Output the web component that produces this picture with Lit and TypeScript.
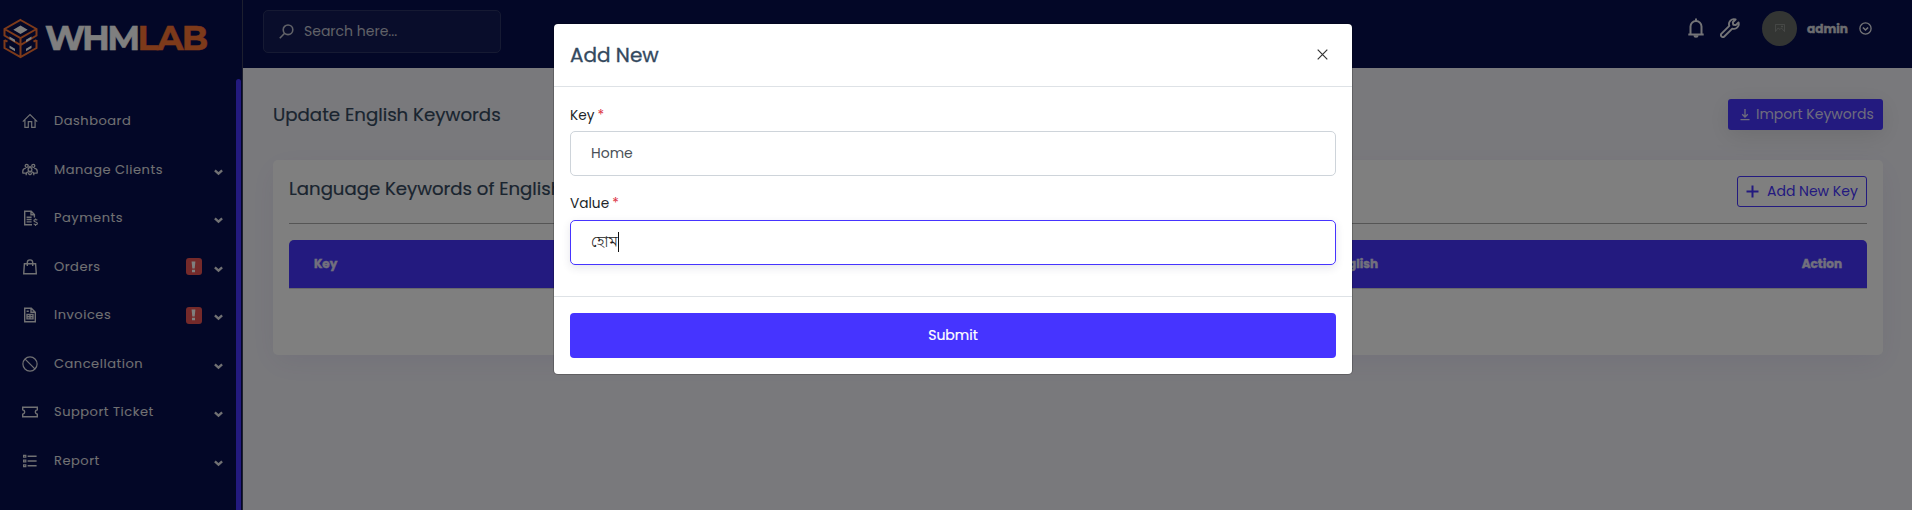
import { LitElement, html, css, svg, nothing } from "lit";
import { customElement, property } from "lit/decorators.js";

/** Wordmark part whose tracking is adjusted so that it fills a given measure. */
@customElement("tracked-text")
class TrackedText extends LitElement {
  @property({ type: Number }) measure = 0;
  @property() text = "";

  static styles = css`
    :host { display: inline-block; white-space: nowrap; flex: none; }
    .t { display: inline-block; }
  `;

  firstUpdated() {
    this.fit();
    document.fonts.ready.then(() => this.fit());
  }

  fit() {
    const el = this.renderRoot.querySelector(".t") as HTMLElement;
    el.style.letterSpacing = "0px";
    const natural = el.getBoundingClientRect().width;
    const gap = (this.measure - natural) / this.text.length;
    el.style.letterSpacing = gap.toFixed(3) + "px";
  }

  render() {
    return html`<span class="t">${this.text}</span>`;
  }
}

const t = (text: string, measure: number) =>
  html`<tracked-text .text=${text} .measure=${measure}></tracked-text>`;

const menuIcons: Record<string, unknown> = {
  home: svg`<path d="M.8 8.600 8 1.600l7.200 7M2.900 7v7.400h3.400V8.700h3.400v5.700h3.400V7"/>`,
  users: svg`<g stroke-width="1.300"><circle cx="4.700" cy="3.800" r="1.500"/><circle cx="11.300" cy="3.800" r="1.500"/><circle cx="8" cy="7.600" r="1.900"/><path d="M.8 11.500V9.300C.8 7.500 2 6.400 3.800 6.400M15.200 11.500V9.300c0-1.800-1.200-2.900-3-2.900M4.200 13.200v-1c0-1.400 1-2.300 2.300-2.300h3c1.300 0 2.300.9 2.300 2.300v1M.8 11.200h3M12.200 11.200h3M6 11.400l2 1.300 2-1.300M6.500 5.500l1.500-1 1.500 1"/></g>`,
  payments: svg`<path stroke-width="1.400" d="M10 14.800H2.700V1.200h6.500l3.200 3.300v3M9 1.400v3.300h3.200M4.600 7.300h5M4.600 9.500h5M4.600 11.900h5"/><path d="M15.200 10.200c-.5-.9-3.300-.9-3.300.6s3.500.9 3.500 2.600c0 1.600-3.100 1.400-3.700.4M13.500 8.600v1M13.500 14.800v1.200"/>`,
  bag: svg`<path stroke-width="1.400" d="M2.400 4.800h11.200l.7 10H1.700zM5.300 7V3.600a2.700 2.700 0 0 1 5.400 0V7"/>`,
  invoice: svg`<path stroke-width="1.400" d="M2.700 1.200h6.600l4 4v9.600H2.700zM9 1.400v3.900h4M4.600 4.200h2.200M5 7.500h6v4.400H5zM5 9.700h6M8 7.500v4.400"/>`,
  ban: svg`<circle cx="8" cy="8" r="7.100"/><path d="m3.100 3.100 9.800 9.800"/>`,
  ticket: svg`<path stroke-width="1.400" d="M.7 3.200h14.600v2.600c-1.200.3-2 1.100-2 2.200s.8 1.900 2 2.200v2.600H.7v-2.600c1.200-.3 2-1.100 2-2.200S1.900 6.100.7 5.800z"/>`,
  list: svg`<path d="M1.600 2.300h2.200v1.800H1.600zM1.600 7.100h2.200v1.800H1.600zM1.600 11.900h2.200v1.800H1.600z"/><path stroke-width="1.400" d="M5.600 3.200h9M5.600 8h9M5.600 12.800h9"/>`,
};

interface Item { icon: string; label: string; arrow?: boolean; alert?: boolean; }

const items: Item[] = [
  { icon: "home", label: "Dashboard" },
  { icon: "users", label: "Manage Clients", arrow: true },
  { icon: "payments", label: "Payments", arrow: true },
  { icon: "bag", label: "Orders", arrow: true, alert: true },
  { icon: "invoice", label: "Invoices", arrow: true, alert: true },
  { icon: "ban", label: "Cancellation", arrow: true },
  { icon: "ticket", label: "Support Ticket", arrow: true },
  { icon: "list", label: "Report", arrow: true },
];

@customElement("app-root")
class AppRoot extends LitElement {
  static styles = css`
    * { box-sizing: border-box; }
    :host {
      display: block; position: relative; width: 100%; height: 510px; overflow: hidden;
      font-family: Poppins, Inter, "Noto Sans Bengali", "Noto Sans", sans-serif;
      background: #f3f3f9; color: #34495e; white-space: nowrap;
    }
    svg { display: block; flex: none; fill: none; stroke: currentColor; }
    .page { display: grid; grid-template-columns: 243px 1fr; height: 510px; }
    .side { background: #070f4e; border-right: 1px solid #3a3f5f; display: flex; flex-direction: column; overflow: hidden; color: #e2e2e6; }
    .brand { height: 79px; padding: 18px 0 0 3px; display: flex; align-items: flex-start; gap: 7px; flex: none; }
    .word { font: 700 34.500px/41px Montserrat, Inter, sans-serif; color: #fff; height: 42px; -webkit-text-stroke: .5px currentColor; }
    .word .lab { color: #fb7435; }
    .body { flex: 1; display: flex; justify-content: space-between; padding-right: 1px; min-height: 0; }
    .bar { width: 5px; background: #4634ff; border-radius: 3px 3px 0 0; }
    .menu { width: 226px; padding-top: 18px; }
    .item { height: 48.500px; display: flex; align-items: center; padding-left: 22px; font-size: 13px; letter-spacing: .52px; }
    .item .name { margin-left: 16px; flex: 1; line-height: 20px; }
    .badge { width: 16px; height: 17px; border-radius: 3px; background: #ea5455; color: #fff; display: grid; place-items: center; margin-right: 12px; }
    .arrow { margin: 5px 3.500px 0 0; }
    .top { height: 68px; background: #070f4e; display: flex; align-items: flex-start; padding: 10px 40px 0 20px; color: #fff; }
    .search { width: 238px; height: 43px; border: 1px solid #2c3566; background: #131b56; border-radius: 5px; display: flex; align-items: center; padding: 0 0 1px 15px; gap: 10px; font-size: 14px; color: #c2c4d0; }
    .tools { margin-left: auto; display: flex; align-items: center; height: 36px; color: #e8e8ee; }
    .wrench { margin-left: 16px; }
    .avatar { width: 35px; height: 35px; border-radius: 50%; background: #676b67; margin-left: 22px; display: grid; place-items: center; color: #a5a8a5; }
    .user { font-size: 12.100px; font-weight: 700; -webkit-text-stroke: .4px currentColor; margin: 0 11px 0 10px; padding-top: 1px; color: #d8d8df; }
    .content { padding: 31px 29px 0 30px; }
    .row { display: flex; justify-content: space-between; align-items: flex-start; }
    .h { font-size: 18.200px; line-height: 32px; font-weight: 400; -webkit-text-stroke: .2px currentColor; }
    .import { width: 155px; height: 31px; border-radius: 3px; background: #4634ff; color: #dcd9fa; display: flex; align-items: center; gap: 5px; padding-left: 11px; font-size: 14px; box-shadow: 0 5px 25px rgba(0,0,0,.1); }
    .card { margin-top: 29px; height: 195px; background: #fff; border-radius: 5px; padding: 16px 16px 0; box-shadow: 0 8px 30px rgba(69,44,190,.07); }
    .card .row { height: 48px; border-bottom: 1px solid #aaa; }
    .card .h { line-height: 26px; font-size: 18.100px; }
    .add { width: 130px; height: 31px; border: 1px solid #4634ff; border-radius: 3px; color: #4634ff; display: flex; align-items: center; gap: 8px; padding-left: 8px; font-size: 14px; }
    .thead { margin-top: 16px; height: 49px; background: #4634ff; border-radius: 5px 5px 0 0; border-bottom: 1px solid #d0d0d8; display: grid; grid-template-columns: 1019.500px 1fr auto; align-items: center; padding: 0 25px; color: #e4e1fa; font-size: 12px; font-weight: 700; -webkit-text-stroke: .4px currentColor; }
    .shade { position: absolute; inset: 0; background: rgba(0,0,0,.5); display: flex; justify-content: center; align-items: flex-start; padding: 24px 6px 0 0; }
    .modal { width: 798px; height: 350px; background: #fff; border-radius: 4px; box-shadow: 0 0 0 1px rgba(0,0,0,.2); display: flex; flex-direction: column; }
    .mhead { height: 63px; border-bottom: 1px solid #dee2e6; display: flex; justify-content: space-between; align-items: center; padding: 0 24.500px 1px 16px; font-size: 20px; font-weight: 400; -webkit-text-stroke: .3px currentColor; flex: none; }
    .close { color: #333; }
    .fields { height: 209px; padding: 18px 16px 0; color: #212529; flex: none; }
    .lab-row { height: 21px; display: flex; align-items: center; gap: 3px; font-size: 13.700px; color: #212529; }
    .second { height: 20px; margin-bottom: 6px; }
    .star { color: #dc3545; font-weight: 400; }
    .field { height: 45px; margin: 5px 0 18px; border: 1px solid #ced4da; border-radius: 5px; display: flex; align-items: center; padding: 0 0 1px 20px; font-size: 14px; color: #495057; }
    .focus { border-color: #4634ff; box-shadow: 0 3px 9px rgba(50,50,93,.12); color: #222; }
    .bn { font-size: 15.600px; font-weight: 300; padding-bottom: 1px; }
    .caret { width: 1px; height: 20px; background: #111; margin-left: .5px; }
    .foot { border-top: 1px solid #dee2e6; padding: 16px; }
    .submit { height: 45px; border-radius: 4px; background: #4634ff; color: #fff; display: grid; place-items: center; font-size: 14px; font-weight: 400; -webkit-text-stroke: .2px currentColor; }
  `;

  item(i: Item) {
    return html`<div class="item">
      <svg width="16" height="16" viewBox="0 0 16 16" stroke-width="1.2">${menuIcons[i.icon]}</svg>
      <span class="name">${i.label}</span>
      ${i.alert ? html`<span class="badge"><svg width="5" height="12" viewBox="0 0 5 12"><path fill="currentColor" stroke="none" d="M.6.500h3.800L3.700 7.500H1.300zM1 8.700h3v2.600H1z"/></svg></span>` : nothing}
      ${i.arrow ? html`<svg class="arrow" width="9" height="7" viewBox="0 0 9 7" stroke-width="2.300"><path d="m.900 1.300 3.600 3.400 3.600-3.400"/></svg>` : nothing}
    </div>`;
  }

  render() {
    return html`
      <div class="page">
        <aside class="side">
          <div class="brand">
            <svg width="35" height="41" viewBox="0 0 35 41" stroke-width="2">
              <path stroke="#fb7435" d="M17.500 2 33.500 11v6.500L17.500 27 1.500 17.500V11zM1.500 11l16 9 16-9M17.500 20v19M1.500 22v8l16 9 16-9v-8M1.500 22l3 1.700M33.500 22l-3 1.700"/>
              <path stroke="none" fill="#fff" d="m17.500 7.500 7.200 4.300-7.200 4.200-7.200-4.200zM6.500 18.500l5.500 3.200v2.600L6.500 21zM6.500 27.500l5.500 3.200v2.600L6.500 30zM28.500 18.500 23 21.700v2.600l5.500-3.300zM28.500 27.500 23 30.700v2.600l5.500-3.300z"/>
            </svg>
            <div class="word">${t("WHM", 92.5)}<span class="lab">${t("LAB", 69)}</span></div>
          </div>
          <div class="body">
            <nav class="menu">${items.map((i) => this.item(i))}</nav>
            <div class="bar"></div>
          </div>
        </aside>
        <main>
          <header class="top">
            <div class="search">
              <svg width="15" height="15" viewBox="0 0 15 15" stroke-width="1.600" stroke="#fff"><circle cx="9" cy="5.800" r="4.800"/><path d="M5.600 9.300.800 14.200"/></svg>
              <span>Search here...</span>
            </div>
            <div class="tools">
              <svg width="16" height="21" viewBox="0 0 16 21" stroke-width="2"><path d="M.300 16.500h15.400M2.500 16.200V8.500a5.500 5.500 0 0 1 11 0v7.700M8 3V.600"/><path fill="currentColor" stroke="none" d="M5.500 17.200h5a2.500 2.500 0 0 1-5 0z"/></svg>
              <svg class="wrench" width="20" height="20" viewBox="0 0 20 20" stroke-width="1.900"><path stroke-linejoin="round" d="M15.600 1.500a4.900 4.900 0 0 0-6.300 6.300L1.500 15.600a1.900 1.900 0 0 0 2.800 2.900l8-7.900a4.900 4.900 0 0 0 6.200-6.200L15.700 7.100l-2.500-.4-.4-2.500z"/></svg>
              <div class="avatar"><svg width="10" height="8" viewBox="0 0 10 8" stroke-width=".6"><path d="M.5.5h9v7M.5.500v7M.5 7.500l2.500-3.500 2 1.500 1.500-1.500 3 3.500M6.500 2h1v1h-1z"/></svg></div>
              <span class="user">admin</span>
              <svg width="13" height="13" viewBox="0 0 13 13" stroke-width="1.300"><circle cx="6.500" cy="6.500" r="5.600"/><path stroke-width="1.600" d="m3.900 5.500 2.600 2.500 2.600-2.500"/></svg>
            </div>
          </header>
          <section class="content">
            <div class="row">
              <div class="h">Update English Keywords</div>
              <div class="import">
                <svg width="12" height="13" viewBox="0 0 12 13" stroke-width="1.300"><path d="M6 1v8M3.200 6.300 6 9l2.800-2.700M1.500 11.600h9"/></svg>
                <span>Import Keywords</span>
              </div>
            </div>
            <div class="card">
              <div class="row">
                <div class="h">Language Keywords of English</div>
                <div class="add">
                  <svg width="13" height="13" viewBox="0 0 13 13" stroke-width="2"><path d="M6.500.500v12M.500 6.500h12"/></svg>
                  <span>Add New Key</span>
                </div>
              </div>
              <div class="thead"><span>Key</span><span>English</span><span>Action</span></div>
            </div>
          </section>
        </main>
      </div>
      <div class="shade">
        <div class="modal">
          <div class="mhead"><span>Add New</span>
            <svg class="close" width="11" height="11" viewBox="0 0 11 11" stroke-width="1.200"><path d="m.700.700 9.600 9.600M10.300.700.700 10.300"/></svg>
          </div>
          <div class="fields">
            <div class="lab-row"><span>Key</span><span class="star">*</span></div>
            <div class="field"><span>Home</span></div>
            <div class="lab-row second"><span>Value</span><span class="star">*</span></div>
            <div class="field focus"><span class="bn">হোম</span><span class="caret"></span></div>
          </div>
          <div class="foot"><div class="submit">Submit</div></div>
        </div>
      </div>`;
  }
}
